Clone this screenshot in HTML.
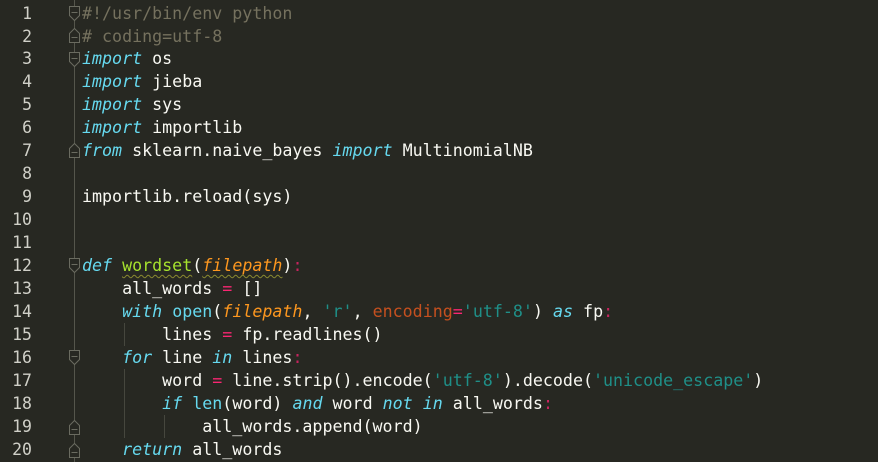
<!DOCTYPE html>
<html><head><meta charset="utf-8"><style>
html,body{margin:0;padding:0;background:#272822;width:878px;height:462px;overflow:hidden}
.l{position:absolute;left:0;height:23px;line-height:23px;font-family:"DejaVu Sans Mono","Liberation Mono",monospace;font-size:16.65px;white-space:pre;color:#f8f8f2}
.n{position:absolute;width:32px;text-align:right;left:0;color:#d0d0c8;font-size:16.5px}
.c{position:absolute;left:82px}
.k{color:#66d9ef;font-style:italic}
.b{color:#66d9ef}
.cm{color:#75715e}
.s{color:#1f8f88}
.p{color:#fd971f;font-style:italic}
.kw{color:#c5501f}
.o{color:#f92672}
.co{color:#c7245e}
.f{color:#a6e22e;text-decoration:underline wavy #8a8a30;text-decoration-thickness:1px;text-underline-offset:3px}
</style></head><body>
<svg width="878" height="462" style="position:absolute;left:0;top:0">
<line x1="74.5" y1="0" x2="74.5" y2="462" stroke="#55564c"/>
<g fill="#272822" stroke="#6a6b60" stroke-width="1">
<path d="M69.5 6.5H79.5V15.5L74.5 20.5L69.5 15.5Z"/><line x1="71.5" y1="12.5" x2="77.5" y2="12.5"/>
<path d="M69.5 33.5L74.5 28.5L79.5 33.5V42.5H69.5Z"/><line x1="71.5" y1="37.5" x2="77.5" y2="37.5"/>
<path d="M69.5 52.5H79.5V61.5L74.5 66.5L69.5 61.5Z"/><line x1="71.5" y1="58.5" x2="77.5" y2="58.5"/>
<path d="M69.5 148.5L74.5 143.5L79.5 148.5V157.5H69.5Z"/><line x1="71.5" y1="152.5" x2="77.5" y2="152.5"/>
<path d="M69.5 258.5H79.5V267.5L74.5 272.5L69.5 267.5Z"/><line x1="71.5" y1="264.5" x2="77.5" y2="264.5"/>
<path d="M69.5 350.5H79.5V359.5L74.5 364.5L69.5 359.5Z"/><line x1="71.5" y1="356.5" x2="77.5" y2="356.5"/>
<path d="M69.5 425.5L74.5 420.5L79.5 425.5V434.5H69.5Z"/><line x1="71.5" y1="429.5" x2="77.5" y2="429.5"/>
<path d="M69.5 448.5L74.5 443.5L79.5 448.5V457.5H69.5Z"/><line x1="71.5" y1="452.5" x2="77.5" y2="452.5"/>
</g>
<line x1="124.5" y1="323" x2="124.5" y2="346" stroke="#46473e"/>
<line x1="124.5" y1="369" x2="124.5" y2="438" stroke="#46473e"/>
<line x1="164.5" y1="415" x2="164.5" y2="438" stroke="#46473e"/>
</svg>
<div class="l" style="top:1.5px"><span class="n">1</span><span class="c cm">#!/usr/bin/env python</span></div>
<div class="l" style="top:24.5px"><span class="n">2</span><span class="c cm"># coding=utf-8</span></div>
<div class="l" style="top:47.4px"><span class="n">3</span><span class="c"><span class="k">import</span> os</span></div>
<div class="l" style="top:70.4px"><span class="n">4</span><span class="c"><span class="k">import</span> jieba</span></div>
<div class="l" style="top:93.3px"><span class="n">5</span><span class="c"><span class="k">import</span> sys</span></div>
<div class="l" style="top:116.3px"><span class="n">6</span><span class="c"><span class="k">import</span> importlib</span></div>
<div class="l" style="top:139.2px"><span class="n">7</span><span class="c"><span class="k">from</span> sklearn.naive_bayes <span class="k">import</span> MultinomialNB</span></div>
<div class="l" style="top:162.2px"><span class="n">8</span></div>
<div class="l" style="top:185.1px"><span class="n">9</span><span class="c">importlib.reload(sys)</span></div>
<div class="l" style="top:208.1px"><span class="n">10</span></div>
<div class="l" style="top:231px"><span class="n">11</span></div>
<div class="l" style="top:254px"><span class="n">12</span><span class="c"><span class="k">def</span> <span class="f">wordset</span>(<span class="p" style="text-decoration:underline wavy #8a8a30;text-decoration-thickness:1px;text-underline-offset:3px">filepath</span>)<span class="co">:</span></span></div>
<div class="l" style="top:276.9px"><span class="n">13</span><span class="c">    all_words <span class="o">=</span> []</span></div>
<div class="l" style="top:299.9px"><span class="n">14</span><span class="c">    <span class="k">with</span> <span class="b">open</span>(<span class="p">filepath</span>, <span class="s">'r'</span>, <span class="kw">encoding</span><span class="o">=</span><span class="s">'utf-8'</span>) <span class="k">as</span> fp<span class="co">:</span></span></div>
<div class="l" style="top:322.8px"><span class="n">15</span><span class="c">        lines <span class="o">=</span> fp.readlines()</span></div>
<div class="l" style="top:345.8px"><span class="n">16</span><span class="c">    <span class="k">for</span> line <span class="k">in</span> lines<span class="co">:</span></span></div>
<div class="l" style="top:368.7px"><span class="n">17</span><span class="c">        word <span class="o">=</span> line.strip().encode(<span class="s">'utf-8'</span>).decode(<span class="s">'unicode_escape'</span>)</span></div>
<div class="l" style="top:391.7px"><span class="n">18</span><span class="c">        <span class="k">if</span> <span class="b">len</span>(word) <span class="k">and</span> word <span class="k">not</span> <span class="k">in</span> all_words<span class="co">:</span></span></div>
<div class="l" style="top:414.6px"><span class="n">19</span><span class="c">            all_words.append(word)</span></div>
<div class="l" style="top:437.6px"><span class="n">20</span><span class="c">    <span class="k">return</span> all_words</span></div>
</body></html>
